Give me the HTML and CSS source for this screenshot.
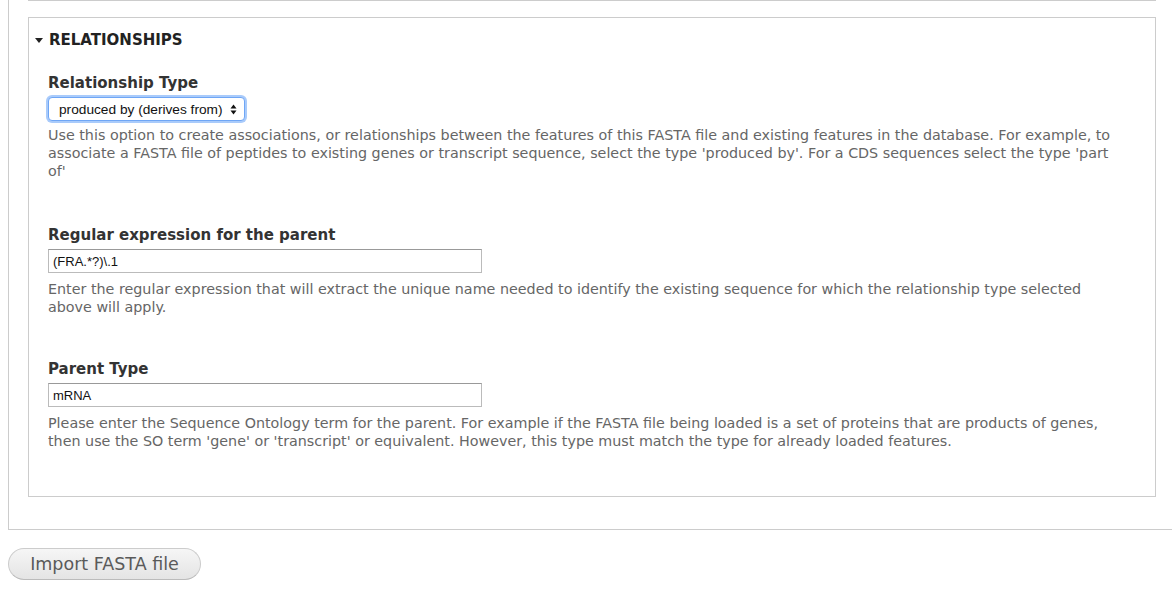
FILE: index.html
```html
<!DOCTYPE html>
<html>
<head>
<meta charset="utf-8">
<link rel="stylesheet" href="styles.css">
</head>
<body>
<div class="outer">
  <div class="prev-end"></div>
  <div class="inner">
    <div class="legend"><svg class="tri" width="8" height="5" viewBox="0 0 8 5"><path d="M0 0 H8 L4 5 Z" fill="#222"/></svg>RELATIONSHIPS</div>
    <div class="item item-first">
      <label class="label">Relationship Type</label>
      <div class="select-wrap">
        <select class="select"><option>produced by (derives from)</option></select>
        <svg class="arrows" width="7" height="11" viewBox="0 0 7 11"><path d="M3.5 0.5 L6.5 4.5 L0.5 4.5 Z M3.5 10.5 L6.5 6.5 L0.5 6.5 Z" fill="#111"/></svg>
      </div>
      <div class="desc desc-select">Use this option to create associations, or relationships between the features of this FASTA file and existing features in the database. For example, to associate a FASTA file of peptides to existing genes or transcript sequence, select the type 'produced by'. For a CDS sequences select the type 'part of'</div>
    </div>
    <div class="item item-second">
      <label class="label">Regular expression for the parent</label>
      <input class="text" type="text" value="(FRA.*?)\.1">
      <div class="desc">Enter the regular expression that will extract the unique name needed to identify the existing sequence for which the relationship type selected above will apply.</div>
    </div>
    <div class="item">
      <label class="label">Parent Type</label>
      <input class="text" type="text" value="mRNA">
      <div class="desc">Please enter the Sequence Ontology term for the parent. For example if the FASTA file being loaded is a set of proteins that are products of genes, then use the SO term 'gene' or 'transcript' or equivalent. However, this type must match the type for already loaded features.</div>
    </div>
  </div>
</div>
<button class="btn" type="button">Import FASTA file</button>
</body>
</html>
```
FILE: styles.css
```css
html { overflow: hidden; }
body {
  margin: 0 0 0 8px;
  background: #fff;
  font-family: "DejaVu Sans", Verdana, sans-serif;
  color: #333;
}
.outer {
  width: 1180px;
  box-sizing: border-box;
  border-left: 1px solid #ccc;
  border-right: 1px solid #ccc;
  border-bottom: 1px solid #ccc;
  padding: 0 31px 32px 19px;
}
.prev-end {
  height: 0;
  border-bottom: 1px solid #ccc;
}
.inner {
  margin-top: 16px;
  border: 1px solid #ccc;
  padding: 0 19px 46px 19px;
}
.legend {
  display: flex;
  align-items: center;
  margin: 0 0 0 -14px;
  padding-top: 12px;
  font-weight: bold;
  font-size: 15px;
  line-height: 20px;
  color: #222;
}
.tri {
  display: block;
  margin: 0 6px 0 1px;
}
.item { padding-top: 42px; }
.item-first { padding-top: 22px; }
.item-second { padding-top: 44px; }
.label {
  display: block;
  font-weight: bold;
  font-size: 15px;
  line-height: 22px;
  color: #333;
  margin-bottom: 3px;
}
.select-wrap {
  position: relative;
  width: 197px;
  height: 24px;
}
.select {
  -webkit-appearance: none;
  appearance: none;
  display: block;
  width: 197px;
  height: 24px;
  margin: 0;
  border: 1px solid #6fa6f5;
  border-radius: 4px;
  box-shadow: 0 0 0 2px #a9cbfb;
  background: #fff;
  font-family: "Liberation Sans", Arial, sans-serif;
  font-size: 13.7px;
  color: #111;
  padding: 0 0 0 10px;
  outline: none;
}
.arrows {
  position: absolute;
  right: 8px;
  top: 7px;
  pointer-events: none;
}
.text {
  display: block;
  box-sizing: border-box;
  width: 434px;
  height: 24px;
  margin: 0;
  border: 1px solid #bbb;
  border-top-color: #999;
  border-radius: 0;
  padding: 0 4px;
  font-family: "Liberation Sans", Arial, sans-serif;
  font-size: 13px;
  color: #111;
  outline: none;
}
.desc {
  margin-top: 7px;
  padding-right: 15px;
  font-size: 14.3px;
  line-height: 18px;
  color: #666;
}
.desc-select { margin-top: 5px; }
.btn {
  display: block;
  margin: 18px 0 0 0;
  width: 193px;
  height: 32px;
  border: 1px solid #ccc;
  border-bottom-color: #bbb;
  border-radius: 16px;
  background: linear-gradient(#f6f6f6, #e4e4e4);
  font-family: "DejaVu Sans", Verdana, sans-serif;
  font-size: 17.5px;
  color: #5a5a5a;
  padding: 0;
}
```
